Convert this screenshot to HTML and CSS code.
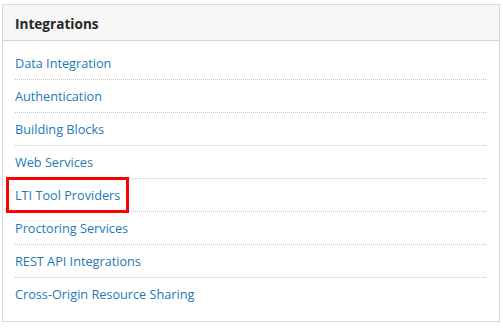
FILE: index.html
```html
<!DOCTYPE html>
<html lang="en">
<head>
    <meta charset="UTF-8">
    <title>Integrations</title>
    <link rel="stylesheet" href="styles.css">
</head>
<body>

<div class="panel">
    <div class="panel-header">Integrations</div>
    <ul class="panel-list">
        <li><a href="#">Data Integration</a></li>
        <li><a href="#">Authentication</a></li>
        <li><a href="#">Building Blocks</a></li>
        <li><a href="#">Web Services</a></li>
        <li><a href="#" class="marked">LTI Tool Providers</a></li>
        <li><a href="#">Proctoring Services</a></li>
        <li><a href="#">REST API Integrations</a></li>
        <li><a href="#">Cross-Origin Resource Sharing</a></li>
    </ul>
</div>

</body>
</html>
```

FILE: styles.css
```css
body {
    margin: 0;
    padding: 4px 3px 0 2px;
    font-family: "Open Sans", Arial, sans-serif;
    background-color: #fff;
}

.panel {
    border: 1px solid #d9d9d9;
}

.panel-header {
    background-color: #f7f7f7;
    border-bottom: 1px solid #d4d4d4;
    padding: 9px 12px 0 12px;
    height: 26px;
    font-size: 13.6px;
    font-weight: bold;
    color: #262626;
}

.panel-list {
    list-style: none;
    margin: 0;
    padding: 6px 13px 11px 12px;
}

.panel-list li {
    padding: 8px 0;
    line-height: 16px;
    font-size: 12.7px;
    border-bottom: 1px dotted #c4c4c4;
}

.panel-list li:last-child {
    border-bottom: none;
}

.panel-list a {
    color: #2479b5;
    text-decoration: none;
}

.panel-list a.marked {
    outline: 3px solid #f00;
    outline-offset: 6px;
}
```
